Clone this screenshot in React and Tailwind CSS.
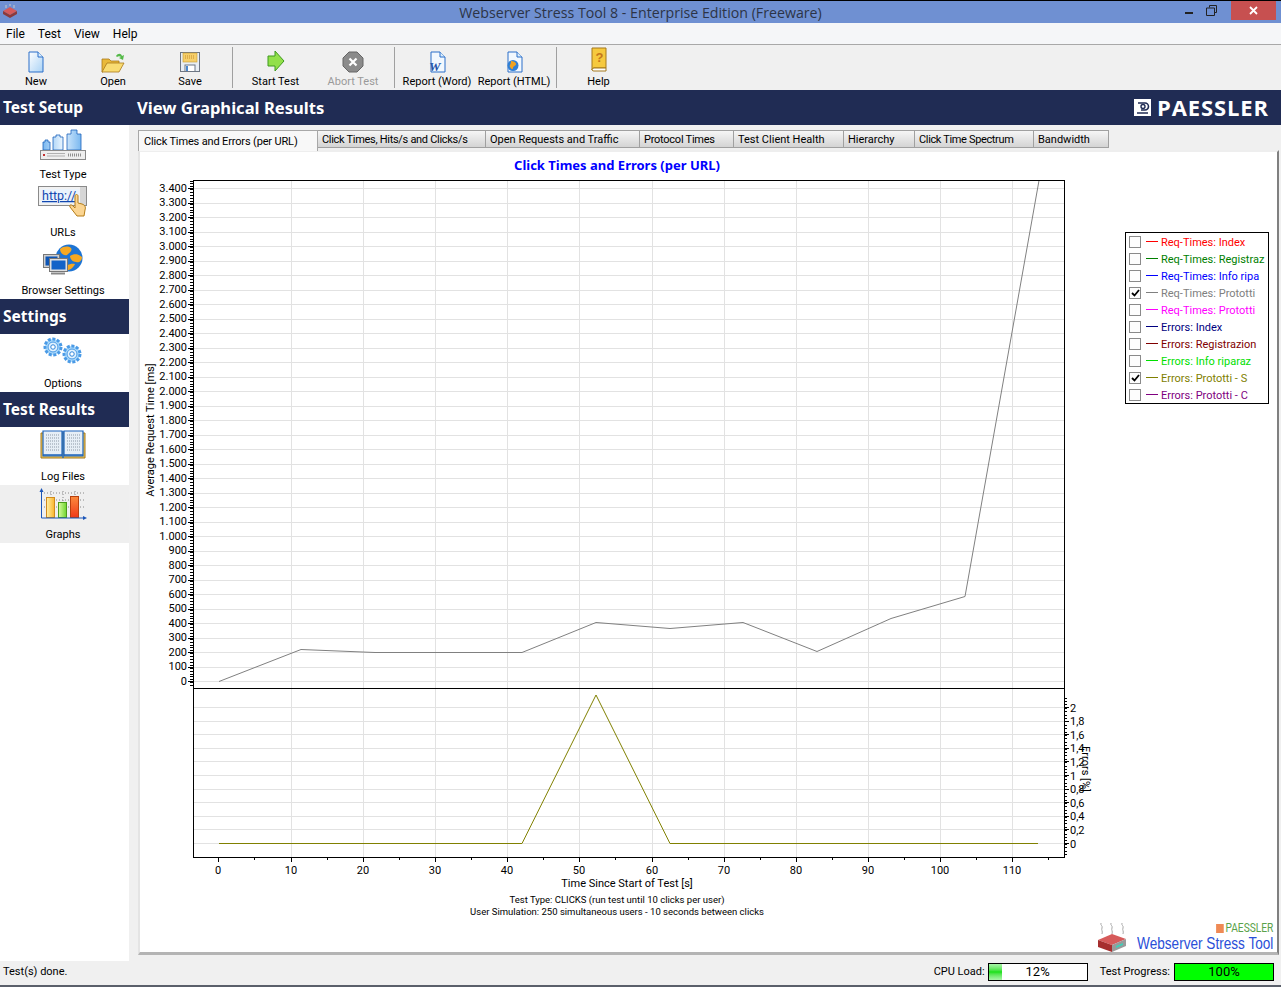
const uiFont = { fontFamily: 'Roboto, Tahoma, sans-serif' };
const headFont = { fontFamily: '"Noto Sans", Tahoma, sans-serif' };

const menuItems = ['File', 'Test', 'View', 'Help'];

const tabs = [
  { label: 'Click Times, Hits/s and Clicks/s', w: 'w-[168px] tracking-[-0.3px]' },
  { label: 'Open Requests and Traffic', w: 'w-[154px]' },
  { label: 'Protocol Times', w: 'w-[94px] tracking-[-0.25px]' },
  { label: 'Test Client Health', w: 'w-[110px]' },
  { label: 'Hierarchy', w: 'w-[71px]' },
  { label: 'Click Time Spectrum', w: 'w-[119px] tracking-[-0.35px]' },
  { label: 'Bandwidth', w: 'w-[75px]' },
];

const legendItems = [
  { label: 'Req-Times: Index', color: '#ff0000' },
  { label: 'Req-Times: Registraz', color: '#008000' },
  { label: 'Req-Times: Info ripa', color: '#0000ff' },
  { label: 'Req-Times: Prototti', color: '#808080', checked: true },
  { label: 'Req-Times: Prototti', color: '#ff00ff' },
  { label: 'Errors: Index', color: '#000080' },
  { label: 'Errors: Registrazion', color: '#800000' },
  { label: 'Errors: Info riparaz', color: '#00e000' },
  { label: 'Errors: Prototti - S', color: '#808000', checked: true },
  { label: 'Errors: Prototti - C', color: '#800080' },
];

const reqLine = '219,681.5 301,649.5 375,652.5 448,652.5 522,652.5 596,622.5 670,628.5 743,622.5 817,651.5 891,618.5 965,596.5 1039,180.5';
const errLine = '219,843.5 522,843.5 596,695 670,843.5 1038,843.5';

const xGrid = [291, 363, 435, 507, 579, 652, 724, 796, 868, 940, 1012];
const xLabels = [218, ...xGrid];

function IconNew() {
  return (
    <svg width="18" height="22" viewBox="0 0 18 22">
      <defs>
        <linearGradient id="pageFill" x1="0" y1="0" x2="1" y2="1">
          <stop offset="0" stopColor="#ffffff" />
          <stop offset="1" stopColor="#a9d2f5" />
        </linearGradient>
      </defs>
      <path d="M2 1h9l5 5v15H2z" fill="url(#pageFill)" stroke="#2a6fc9" />
      <path d="M11 1v5h5" fill="#dceefc" stroke="#2a6fc9" />
    </svg>
  );
}

function IconOpen() {
  return (
    <svg width="24" height="22" viewBox="0 0 24 22">
      <path d="M15 5c2-3 5-3 6 0l2-1-1 5-4-2 2-1c-1-1-3-1-4 0z" fill="#54b948" />
      <path d="M1 8h7l2 2h8v3H6l-4 8H1z" fill="#e9b93a" stroke="#a9791a" strokeWidth=".8" />
      <path d="M6 12h17l-5 9H1z" fill="#f9dc72" stroke="#a9791a" strokeWidth=".8" />
    </svg>
  );
}

function IconSave() {
  return (
    <svg width="22" height="22" viewBox="0 0 22 22">
      <rect x="1.5" y="1.5" width="19" height="19" fill="#e8eef4" stroke="#6d7684" />
      <rect x="4" y="2" width="14" height="9" fill="#f6cf6a" stroke="#c79a2c" strokeWidth=".6" />
      <path d="M6 5h10M6 7h10" stroke="#c58d2a" strokeDasharray="1 1" />
      <rect x="6" y="14" width="10" height="6.5" fill="#ffffff" stroke="#6d7684" />
      <rect x="7" y="15" width="2" height="5" fill="#4a88cf" />
    </svg>
  );
}

function IconStart() {
  return (
    <svg width="20" height="24" viewBox="0 0 20 24">
      <path d="M2 7h7V2l9 10-9 10v-5H2z" fill="#92e04a" stroke="#3f9a1f" />
    </svg>
  );
}

function IconAbort() {
  return (
    <svg width="22" height="22" viewBox="0 0 22 22">
      <path d="M7 1h8l6 6v8l-6 6H7l-6-6V7z" fill="#8b8b8b" stroke="#666666" />
      <path d="M7.5 7.5l7 7M14.5 7.5l-7 7" stroke="#ffffff" strokeWidth="2.2" />
    </svg>
  );
}

function IconReport({ kind }) {
  return (
    <svg width="18" height="22" viewBox="0 0 18 22">
      <path d="M3 1h9l5 5v15H3z" fill="#f2f8fe" stroke="#2a6fc9" />
      <path d="M12 1v5h5" fill="#dceefc" stroke="#2a6fc9" />
      {kind === 'word' ? (
        <text x="1" y="20" fontSize="13" fontWeight="700" fontStyle="italic" fill="#2553a8" fontFamily="Liberation Serif">W</text>
      ) : (
        <g>
          <circle cx="8" cy="14.5" r="5.5" fill="#2f7fd6" />
          <path d="M6 10c2 0 5 1 5 3s-3 2-3 4-2 1-3-1 1-2 1-6z" fill="#f0a21f" />
        </g>
      )}
    </svg>
  );
}

function IconHelp() {
  return (
    <svg width="18" height="26" viewBox="0 0 18 26">
      <path d="M2 1h14v20H4a2 2 0 0 0-2 2z" fill="#f6c93e" stroke="#a4791c" />
      <path d="M2 23a2 2 0 0 1 2-2h12v3H4a2 2 0 0 1-2-1z" fill="#ffffff" stroke="#a4791c" />
      <text x="9.5" y="15" fontSize="13" fontWeight="700" textAnchor="middle" fill="#c5761a" fontFamily="Liberation Sans">?</text>
    </svg>
  );
}

function IconTestType() {
  return (
    <svg width="48" height="32" viewBox="0 0 48 32">
      <defs>
        <linearGradient id="weight" x1="0" y1="0" x2="1" y2="0">
          <stop offset="0" stopColor="#7ab8f0" />
          <stop offset=".5" stopColor="#e6f3fe" />
          <stop offset="1" stopColor="#7ab8f0" />
        </linearGradient>
      </defs>
      <path d="M4 22v-8h2v-2h3v2h2v8zM14 22V9h3V7h4v2h3v13zM28 22V6h4V2h6v4h4v16z" fill="url(#weight)" stroke="#1c63bb" strokeWidth=".8" />
      <rect x="1.5" y="22.5" width="45" height="9" fill="#eeeeee" stroke="#8a8a8a" />
      <rect x="4" y="26" width="2" height="2" fill="#c43030" />
      <path d="M8 25.5h18M8 28h18" stroke="#b0b0b0" />
      <path d="M29 27h14" stroke="#909090" strokeWidth="3" strokeDasharray="1 1" />
    </svg>
  );
}

function IconUrls() {
  return (
    <svg width="50" height="31" viewBox="0 0 50 31">
      <rect x=".5" y=".5" width="48" height="19" fill="#f2f2f2" stroke="#8a8a8a" />
      <rect x="3" y="3" width="38" height="14" fill="#eaf3fc" />
      <rect x="42" y="1" width="6" height="18" fill="#d6d6d6" />
      <text x="4" y="14" fontSize="12.5" fill="#1247b0" textDecoration="underline" fontFamily="Roboto">http://</text>
      <path d="M37 10c0-2 3-2 3 0v7l4 1c3 1 4 3 3 6l-1 6h-7l-7-9c-1-2 1-3 3-1l2 2z" fill="#fbd592" stroke="#b67d16" />
    </svg>
  );
}

function IconBrowser() {
  return (
    <svg width="40" height="31" viewBox="0 0 40 31">
      <circle cx="26" cy="14" r="13.5" fill="#1d74d4" />
      <path d="M17 5c4-3 8-3 11-1 2 3-2 5-4 7-3 1-7-2-7-6zM27 12c4-3 9-2 12 1 0 4-3 6-6 5-3 0-6-3-6-6zM21 25c1-3 6-6 11-5-2 4-6 8-11 5z" fill="#f6a821" />
      <rect x=".5" y="10.5" width="16" height="13" fill="#cfcfcf" stroke="#777777" />
      <rect x="2.5" y="12.5" width="12" height="9" fill="#0d55b5" />
      <rect x="6.5" y="14.5" width="18" height="13" fill="#e0e0e0" stroke="#777777" />
      <rect x="8.5" y="16.5" width="14" height="9" fill="#1463c8" />
      <path d="M8 29.5h14" stroke="#888888" strokeWidth="2" />
    </svg>
  );
}

function Gear({ cx, cy, r }) {
  return (
    <g>
      <circle cx={cx} cy={cy} r={r} fill="#a9d8fa" stroke="#4a9ae6" strokeWidth="3" strokeDasharray="3 1.6" />
      <circle cx={cx} cy={cy} r={r * 0.62} fill="#e2f2fe" stroke="#4a9ae6" />
      <circle cx={cx} cy={cy} r={r * 0.28} fill="#ffffff" stroke="#2f86dc" />
    </g>
  );
}

function IconOptions() {
  return (
    <svg width="42" height="28" viewBox="0 0 42 28">
      <Gear cx={11} cy={10} r={8} />
      <Gear cx={30} cy={17} r={8} />
    </svg>
  );
}

function IconLogFiles() {
  return (
    <svg width="46" height="30" viewBox="0 0 46 30">
      <path d="M1 3h44v25H1z" fill="#f0c85a" stroke="#a4791c" />
      <path d="M3 1h19v25H3zM24 1h19v25H24z" fill="#e6eef6" stroke="#1c63bb" strokeWidth="1.2" />
      <path d="M6 5h13M6 8h13M6 11h13M6 14h13M6 17h13M6 20h13M27 5h13M27 8h13M27 11h13M27 14h13M27 17h13M27 20h13" stroke="#8c98a6" strokeDasharray="1 1" />
      <path d="M3 25h19M24 25h19" stroke="#1c63bb" strokeWidth="1.5" />
      <path d="M23 1v27" stroke="#1c63bb" strokeWidth="1.4" />
    </svg>
  );
}

function IconGraphs() {
  return (
    <svg width="48" height="33" viewBox="0 0 48 33">
      <defs>
        <linearGradient id="barY" x1="0" y1="0" x2="1" y2="0">
          <stop offset="0" stopColor="#fff0a8" />
          <stop offset="1" stopColor="#f9b52c" />
        </linearGradient>
        <linearGradient id="barG" x1="0" y1="0" x2="1" y2="0">
          <stop offset="0" stopColor="#d8fba0" />
          <stop offset="1" stopColor="#6ed42c" />
        </linearGradient>
        <linearGradient id="barR" x1="0" y1="0" x2="0" y2="1">
          <stop offset="0" stopColor="#fb8a3c" />
          <stop offset="1" stopColor="#f03a1a" />
        </linearGradient>
      </defs>
      <path d="M2 5h44M2 12h44M2 19h44M12 3v26M24 3v26M36 3v26" stroke="#888888" strokeDasharray="1 2" />
      <rect x="7.5" y="9.5" width="8" height="20" fill="url(#barY)" stroke="#d08a1c" />
      <rect x="19.5" y="14.5" width="8" height="15" fill="url(#barG)" stroke="#4c9a1c" />
      <rect x="31.5" y="8.5" width="8" height="21" fill="url(#barR)" stroke="#b8400e" />
      <path d="M2.5 3v27H46" fill="none" stroke="#1c56b8" />
      <path d="M2.5 0l-2 4h4zM48 30l-4-2v4z" fill="#1c56b8" />
    </svg>
  );
}

function IconRouter() {
  return (
    <svg width="30" height="30" viewBox="0 0 30 30">
      <path d="M4 0c-1 2 2 3 1 5s1 3 0 6M14 0c-1 2 2 3 1 5s1 3 0 6M25 0c-1 2 2 3 1 5s1 3 0 6" fill="none" stroke="#a8a8a8" />
      <path d="M1 17l14-6 14 5-14 6z" fill="#d65a5a" />
      <path d="M1 17l14 5v7L1 24z" fill="#a62e2e" />
      <path d="M15 22l14-6v7l-14 6z" fill="#9a9a9a" />
      <path d="M19 23l7-3v2l-7 3z" fill="#3fd0b8" />
    </svg>
  );
}

function ToolButton({ label, w, disabled, children }) {
  return (
    <div className={`${w} flex flex-col items-center shrink-0`}>
      <div className="h-[26px] flex items-end">{children}</div>
      <span className={`mt-[1px] text-[11px] leading-[16px] whitespace-nowrap ${disabled ? 'text-[#9a9a9a]' : 'text-black'}`}>
        {label}
      </span>
    </div>
  );
}

function SideHeader({ children }) {
  return (
    <div className="h-[35px] pt-[1px] bg-[#202c54] text-white text-[15.5px] font-bold flex items-center pl-[3px]" style={headFont}>
      {children}
    </div>
  );
}

function SideItem({ label, active, children }) {
  return (
    <div className={`h-[58px] flex flex-col items-center pr-[3px] ${active ? 'bg-[#efefef]' : ''}`}>
      <div className="h-[41px] pt-[3px] flex items-start justify-center">{children}</div>
      <span className="mt-[1px] text-[11px] leading-[16px] whitespace-nowrap">{label}</span>
    </div>
  );
}

function Chart() {
  const yMajor = [];
  for (let i = 0; i <= 34; i++) yMajor.push(i);
  const yMinor = [];
  for (let y = 181; y < 688; y += 2.9) yMinor.push(y);
  const errTicks = ['0', '0,2', '0,4', '0,6', '0,8', '1', '1,2', '1,4', '1,6', '1,8', '2'];
  const errMinor = [];
  for (let y = 698; y < 857; y += 3.4) errMinor.push(y);

  return (
    <svg width="973" height="800" viewBox="140 152 973 800" className="shrink-0" fontFamily="Roboto" fontSize="11">
      <text x="617" y="170" textAnchor="middle" fontSize="13" fontWeight="700" fill="#0000ff" style={headFont}>
        Click Times and Errors (per URL)
      </text>

      <g stroke="#e2e2e2" shapeRendering="crispEdges">
        {xGrid.map((x) => (
          <line key={x} x1={x} y1="181" x2={x} y2="857" />
        ))}
        {yMajor.map((i) => (
          <line key={i} x1="193" y1={681.5 - i * 14.5} x2="1064" y2={681.5 - i * 14.5} />
        ))}
        {errTicks.map((t, i) => (
          <line key={t} x1="193" y1={843.5 - i * 13.6} x2="1064" y2={843.5 - i * 13.6} />
        ))}
      </g>

      <g stroke="#000000" shapeRendering="crispEdges">
        {yMinor.map((y) => (
          <line key={y} x1="190" y1={y} x2="193" y2={y} />
        ))}
        {yMajor.map((i) => (
          <line key={i} x1="188" y1={681.5 - i * 14.5} x2="193" y2={681.5 - i * 14.5} />
        ))}
        {errMinor.map((y) => (
          <line key={y} x1="1064" y1={y} x2="1067" y2={y} />
        ))}
        {errTicks.map((t, i) => (
          <line key={t} x1="1064" y1={843.5 - i * 13.6} x2="1069" y2={843.5 - i * 13.6} />
        ))}
        {xLabels.map((x) => (
          <g key={x}>
            <line x1={x} y1="857" x2={x} y2="862" />
            <line x1={x + 36} y1="857" x2={x + 36} y2="860" />
          </g>
        ))}
      </g>

      <polyline points={reqLine} fill="none" stroke="#808080" />
      <polyline points={errLine} fill="none" stroke="#808000" />

      <rect x="193.5" y="180.5" width="871" height="677" fill="none" stroke="#000000" shapeRendering="crispEdges" />
      <line x1="193" y1="688.5" x2="1064" y2="688.5" stroke="#000000" shapeRendering="crispEdges" />

      {yMajor.map((i) => (
        <text key={i} x="187" y={684.5 - i * 14.5} textAnchor="end">
          {i === 0 ? '0' : i * 100 >= 1000 ? `${Math.floor(i / 10)}.${String((i % 10) * 100).padStart(3, '0')}` : i * 100}
        </text>
      ))}
      {errTicks.map((t, i) => (
        <text key={t} x="1070" y={847.5 - i * 13.6}>{t}</text>
      ))}
      {xLabels.map((x, i) => (
        <text key={x} x={x} y="874" textAnchor="middle">{i * 10}</text>
      ))}

      <text transform="translate(154 430) rotate(-90)" textAnchor="middle">Average Request Time [ms]</text>
      <text transform="translate(1082 769) rotate(90)" textAnchor="middle">Errors [%]</text>
      <text x="627" y="887" textAnchor="middle">Time Since Start of Test [s]</text>
      <text x="617" y="903" textAnchor="middle" fontSize="9.5">Test Type: CLICKS (run test until 10 clicks per user)</text>
      <text x="617" y="915" textAnchor="middle" fontSize="9.5">User Simulation: 250 simultaneous users - 10 seconds between clicks</text>
    </svg>
  );
}

function Legend() {
  return (
    <div className="ml-[12px] mt-[80px] w-[144px] h-[172px] border border-black bg-white shrink-0">
      {legendItems.map((item, i) => (
        <div key={i} className="h-[17px] flex items-center pl-[3px]">
          <span className="w-[12px] h-[12px] border border-[#8a8a8a] bg-[#fdfdfd] flex items-center justify-center shrink-0">
            {item.checked && (
              <svg width="9" height="8" viewBox="0 0 9 8">
                <path d="M1 4l2.5 2.5L8 1" fill="none" stroke="#000000" strokeWidth="1.8" />
              </svg>
            )}
          </span>
          <span className="ml-[5px] w-[12px] h-px shrink-0" style={{ backgroundColor: item.color }} />
          <span className="ml-[3px] mt-[2px] text-[11px] leading-none whitespace-nowrap" style={{ color: item.color }}>
            {item.label}
          </span>
        </div>
      ))}
    </div>
  );
}

function LoadBar({ value, pct, full }) {
  return (
    <div className="relative w-[100px] h-[18px] border border-black bg-white overflow-hidden">
      <div
        className={`absolute inset-y-0 left-0 ${full ? 'bg-[#00ff00]' : 'bg-gradient-to-b from-[#a8f5a8] via-[#10e010] to-[#a8f5a8]'}`}
        style={{ width: `${pct}%` }}
      />
      <span className="relative block text-center text-[13px] leading-[16px]">{value}</span>
    </div>
  );
}

export default function App() {
  return (
    <div className="w-[1281px] h-[987px] overflow-hidden bg-[#f0f0f0] text-black flex flex-col" style={uiFont}>
      <div className="h-px bg-black shrink-0" />

      {/* Title bar */}
      <div className="relative h-[22px] pt-[2px] shrink-0 bg-[#6f90d2] flex items-center justify-center">
        <div className="absolute left-[2px] top-[3px]">
          <svg width="16" height="14" viewBox="0 0 16 14">
            <path d="M1 7l7-4 7 4-7 4z" fill="#d65a5a" />
            <path d="M1 7l7 4v3L1 10zM8 11l7-4v3l-7 4z" fill="#8c3a3a" />
            <path d="M4 1v3M8 0v2M12 1v3" stroke="#c8c8c8" />
          </svg>
        </div>
        <span className="text-[14.2px] leading-none text-[#2c3446]" style={{ fontFamily: '"Open Sans", sans-serif' }}>
          Webserver Stress Tool 8 - Enterprise Edition (Freeware)
        </span>
        <div className="absolute right-[5px] top-0 flex items-start">
          <span className="mt-[11px] w-[8px] h-[2px] bg-[#222222]" />
          <svg className="ml-[13px] mt-[4px]" width="11" height="11" viewBox="0 0 11 11">
            <path d="M3.5 2.5V.5h7v7H8.5M.5 3h8v7.5h-8z" fill="none" stroke="#222222" />
          </svg>
          <div className="ml-[14px] w-[45px] h-[19px] bg-[#c75050] flex items-center justify-center">
            <svg width="9" height="9" viewBox="0 0 9 9">
              <path d="M1 1l7 7M8 1l-7 7" stroke="#ffffff" strokeWidth="1.8" />
            </svg>
          </div>
        </div>
      </div>

      {/* Menu */}
      <div className="h-[22px] shrink-0 bg-[#f5f6f8] border-b border-[#a8a8a8] flex items-center pl-[6px] gap-[13px] text-[12px]">
        {menuItems.map((m) => (
          <span key={m}>{m}</span>
        ))}
      </div>

      {/* Toolbar */}
      <div className="h-[45px] shrink-0 bg-[#f0f0f0] flex items-start pt-[2px]">
        <ToolButton label="New" w="w-[72px]"><IconNew /></ToolButton>
        <ToolButton label="Open" w="w-[82px]"><IconOpen /></ToolButton>
        <ToolButton label="Save" w="w-[72px]"><IconSave /></ToolButton>
        <div className="ml-[6px] w-px h-[41px] bg-[#a0a0a0]" />
        <div className="w-[4px]" />
        <ToolButton label="Start Test" w="w-[77px]"><IconStart /></ToolButton>
        <ToolButton label="Abort Test" w="w-[78px]" disabled><IconAbort /></ToolButton>
        <div className="ml-[2px] w-px h-[41px] bg-[#a0a0a0]" />
        <ToolButton label="Report (Word)" w="w-[84px]"><IconReport kind="word" /></ToolButton>
        <ToolButton label="Report (HTML)" w="w-[70px]"><IconReport kind="html" /></ToolButton>
        <div className="ml-[7px] w-px h-[41px] bg-[#a0a0a0]" />
        <ToolButton label="Help" w="w-[83px]"><IconHelp /></ToolButton>
      </div>

      {/* Header band */}
      <div className="h-[35px] shrink-0 bg-[#202c54] text-white font-bold flex items-center pt-[1px]" style={headFont}>
        <span className="w-[137px] pl-[3px] text-[15.5px]">Test Setup</span>
        <span className="text-[16.6px]">View Graphical Results</span>
        <div className="ml-auto mr-[12px] mb-[1px] flex items-center gap-[6px]">
          <svg width="17" height="17" viewBox="0 0 17 17">
            <rect width="17" height="17" fill="#ffffff" />
            <path d="M4 4h7a3.5 3.5 0 0 1 0 7H7M3 14h11" fill="none" stroke="#202c54" strokeWidth="1.6" />
            <circle cx="9" cy="7.5" r="2" fill="none" stroke="#202c54" strokeWidth="1.4" />
          </svg>
          <span className="text-[22px] leading-none tracking-[0.9px] mb-[2px]" style={{ fontFamily: '"Open Sans", sans-serif' }}>PAESSLER</span>
        </div>
      </div>

      {/* Body */}
      <div className="flex-1 min-h-0 flex">
        <aside className="w-[129px] shrink-0 bg-white h-full">
          <SideItem label="Test Type"><IconTestType /></SideItem>
          <SideItem label="URLs"><IconUrls /></SideItem>
          <SideItem label="Browser Settings"><IconBrowser /></SideItem>
          <SideHeader>Settings</SideHeader>
          <SideItem label="Options"><IconOptions /></SideItem>
          <SideHeader>Test Results</SideHeader>
          <SideItem label="Log Files"><IconLogFiles /></SideItem>
          <SideItem label="Graphs" active><IconGraphs /></SideItem>
        </aside>

        <main className="flex-1 min-w-0 pl-[9px] pr-[2px] pt-[5px] flex flex-col">
          <div className="flex h-[20px] shrink-0 items-start text-[11px] relative z-10">
            <div className="w-[180px] h-[21px] bg-[#f8f8f8] border border-b-0 border-[#a8a8a8] pl-[5px] leading-[22px] tracking-[-0.15px] whitespace-nowrap">
              Click Times and Errors (per URL)
            </div>
            {tabs.map((t) => (
              <div
                key={t.label}
                className={`${t.w} h-[18px] border-y border-r border-[#a0a0a0] bg-gradient-to-b from-[#f6f6f6] to-[#d4d4d4] pl-[4px] leading-[18px] whitespace-nowrap`}
              >
                {t.label}
              </div>
            ))}
          </div>

          <div className="relative h-[805px] shrink-0 bg-white border-x-2 border-t-2 border-b-[3px] border-x-[#e4e4e4] border-t-[#eeeeee] border-b-[#b4b4b4] border-r-[#808080] flex items-start">
            <Chart />
            <Legend />
            <div className="absolute right-[4px] bottom-[-1px] flex items-end">
              <IconRouter />
              <div className="ml-[9px] w-[137px] flex flex-col items-end">
                <div className="flex items-center gap-[2px] mb-[-1px]" style={{ transform: 'scaleX(.85)', transformOrigin: 'right' }}>
                  <span className="w-[9px] h-[9px] bg-[#ef8a55]" />
                  <span className="text-[12px] leading-[13px] text-[#5aa24a]">PAESSLER</span>
                </div>
                <span
                  className="text-[17px] leading-[19px] text-[#2a4fd8] whitespace-nowrap"
                  style={{ fontFamily: '"Liberation Sans", sans-serif', transform: 'scaleX(.8)', transformOrigin: 'right' }}
                >
                  Webserver Stress Tool
                </span>
              </div>
            </div>
          </div>
        </main>
      </div>

      {/* Status bar */}
      <div className="h-[24px] shrink-0 bg-[#f0f0f0] flex items-center text-[11px] pb-[3px]">
        <span className="pl-[3px] mt-[2px]">Test(s) done.</span>
        <span className="ml-auto mr-[3px] mt-[2px]">CPU Load:</span>
        <LoadBar value="12%" pct={14} />
        <span className="ml-[12px] mr-[4px] mt-[2px]">Test Progress:</span>
        <LoadBar value="100%" pct={100} full />
        <div className="w-[7px]" />
      </div>
      <div className="h-[2px] shrink-0 bg-[#5a5f6a]" />
    </div>
  );
}
